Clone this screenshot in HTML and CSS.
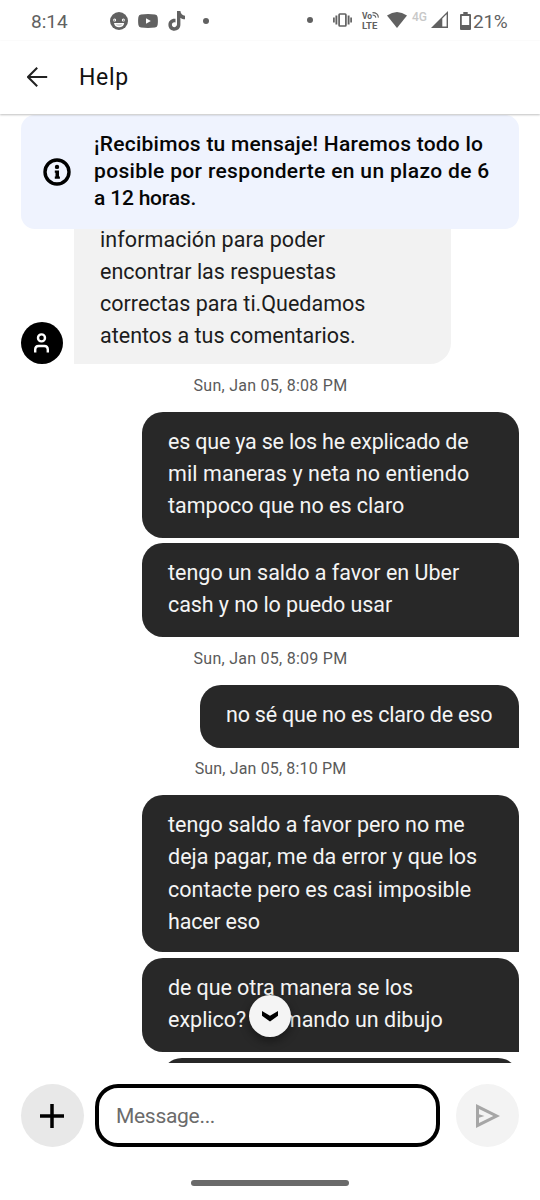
FILE: index.html
```html
<!DOCTYPE html>
<html lang="es">
<head>
<meta charset="utf-8">
<title>Help</title>
<link rel="stylesheet" href="styles.css">
</head>
<body>
<div class="screen">
  <div class="status">
    <div class="status-left">
      <span class="clock">8:14</span>
      <svg class="i-face" width="18" height="18" viewBox="0 0 18 18"><circle cx="9" cy="9" r="9" fill="#616161"/><circle cx="4.600" cy="8" r="1.500" fill="#fff"/><circle cx="13.400" cy="8" r="1.500" fill="#fff"/><circle cx="4.300" cy="8.200" r=".6" fill="#616161"/><circle cx="13.700" cy="8.200" r=".6" fill="#616161"/><path d="M4 11h10.200q-.8 4.300-5.100 4.300T4 11z" fill="#fff"/><path d="M5.500 12.300h7.200q-1 1.700-3.600 1.700t-3.600-1.700z" fill="#616161" opacity=".35"/></svg>
      <svg class="i-tube" width="20" height="14" viewBox="0 0 20 14"><path d="M3 .4Q10-.3 17 .4 19.300.6 19.600 3q.6 4 0 8-.3 2.400-2.600 2.600-7 .7-14 0Q.7 13.400.4 11q-.6-4 0-8Q.7.6 3 .4z" fill="#616161"/><path d="M8 4.200v5.600L12.800 7z" fill="#fff"/></svg>
      <svg class="i-tok" width="18" height="20" viewBox="0 0 18 20"><path d="M9 0h3.400c.2 2.700 2 4.500 4.600 4.700v3.500c-1.700 0-3.300-.5-4.600-1.500v6.900c0 8.200-12 8.200-12 .2 0-4 3.300-6.600 7.100-6v3.600c-2.100-.6-3.600.5-3.600 2.300 0 3.400 5.100 3.200 5.100-.4z" fill="#616161"/></svg>
      <span class="dot"></span>
    </div>
    <div class="status-right">
      <span class="dot"></span>
      <svg class="i-vib" width="19" height="14" viewBox="0 0 19 14" fill="none" stroke="#616161"><rect x="6.100" y="1" width="6.800" height="12" rx=".8" stroke-width="1.700"/><path d="M3.400 2.500v9M15.600 2.500v9" stroke-width="1.900"/><path d="M.9 4.500v5M18.100 4.500v5" stroke-width="1.700"/></svg>
      <span class="volte"><span class="vo">Vo<svg width="7" height="6" viewBox="0 0 7 6" fill="none" stroke="#616161" stroke-width="1.100"><path d="M.5.6q5.600 0 5.900 5M.5 3q3 0 3.300 2.600"/></svg></span><span>LTE</span></span>
      <svg class="i-wifi" width="20" height="16" viewBox="0 0 20 16"><path d="M0 3.600Q10-3.600 20 3.600L10 16z" fill="#616161"/></svg>
      <span class="net">4G</span>
      <svg class="i-sig" width="17" height="17" viewBox="0 0 17 17"><path d="M0 17L17 0v17z" fill="#616161"/><path d="M11.300 7.500l4.300-4.300v12.300h-4.300z" fill="#fff"/></svg>
      <svg class="i-bat" width="11" height="18" viewBox="0 0 11 18"><path d="M3.300 0h4.400v2H10q1 0 1 1v14q0 1-1 1H1q-1 0-1-1V3q0-1 1-1h2.300z" fill="#616161"/><path d="M1.800 4h7.400v9H1.800z" fill="#fff"/></svg>
      <span class="pct">21%</span>
    </div>
  </div>
  <header class="appbar">
    <svg width="21" height="20" viewBox="0 0 21 20" fill="none" stroke="#222" stroke-width="2"><path d="M20.200 10H1.200M10.200.8L1 10l9.200 9.200"/></svg>
    <h1>Help</h1>
  </header>
  <main class="chat">
    <div class="banner">
      <svg width="28" height="28" viewBox="0 0 28 28"><circle cx="14" cy="14" r="12" fill="none" stroke="#000" stroke-width="3.400"/><circle cx="14" cy="8.900" r="2.200"/><path d="M11.800 12.500h4.200v6h.9v2.300h-5.100v-2.300h.7v-3.700h-.7z"/></svg>
      <p><span class="b1">¡Recibimos tu mensaje! Haremos todo lo</span><span class="b2">posible por responderte en un plazo de 6</span><span class="b3">a 12 horas.</span></p>
    </div>
    <div class="row agent">
      <div class="avatar"><svg width="17" height="20" viewBox="0 0 17 20" fill="none" stroke="#fff" stroke-width="2.400"><circle cx="8.500" cy="4.900" r="3.500"/><path d="M2.200 19.500v-3q0-3.500 3.500-3.500h5.600q3.500 0 3.500 3.500v3"/></svg></div>
      <p class="bubble in"><span class="p1">información para poder</span><span>encontrar las respuestas</span><span>correctas para ti.Quedamos</span><span>atentos a tus comentarios.</span></p>
    </div>
    <time>Sun, Jan 05, 8:08 PM</time>
    <p class="bubble out three"><span class="m2">es que ya se los he explicado de</span><span class="p1">mil maneras y neta no entiendo</span><span>tampoco que no es claro</span></p>
    <p class="bubble out two"><span>tengo un saldo a favor en Uber</span><span class="m1">cash y no lo puedo usar</span></p>
    <time>Sun, Jan 05, 8:09 PM</time>
    <p class="bubble out one"><span class="m2">no sé que no es claro de eso</span></p>
    <time class="narrow">Sun, Jan 05, 8:10 PM</time>
    <p class="bubble out four"><span>tengo saldo a favor pero no me</span><span>deja pagar, me da error y que los</span><span>contacte pero es casi imposible</span><span class="m2">hacer eso</span></p>
    <p class="bubble out two"><span class="m1">de que otra manera se los</span><span>explico? Formando un dibujo</span></p>
    <p class="bubble out next"></p>
    <button class="jump" aria-label="Bajar"><svg width="16" height="11" viewBox="0 0 16 11"><path d="M0 0l8 4.800L16 0v4.800L8 10.500 0 4.800z"/></svg></button>
  </main>
  <footer class="composer">
    <button class="add" aria-label="Adjuntar"><svg width="24" height="24" viewBox="0 0 24 24" stroke="#000" stroke-width="3.500"><path d="M12 0v24M0 12h24"/></svg></button>
    <div class="field">Message...</div>
    <button class="send" aria-label="Enviar"><svg width="24" height="24" viewBox="0 0 24 24"><path fill="#a6a6a6" fill-rule="evenodd" d="M0 0l24 12L0 24zM3 4.900v5.300L8.500 12 3 13.800v5.300L17.300 12z"/></svg></button>
  </footer>
  <div class="homebar"></div>
</div>
</body>
</html>
```

FILE: styles.css
```css
* { box-sizing: border-box; }
body { margin: 0; background: #fff; font-family: Roboto, "Noto Sans", sans-serif; }
p, h1 { margin: 0; font-weight: 400; }
button { border: 0; padding: 0; border-radius: 50%; display: flex; align-items: center; justify-content: center; }
svg { display: block; flex: none; }

.screen { width: 540px; height: 1200px; display: flex; flex-direction: column; overflow: hidden; }

.status { height: 41px; display: flex; justify-content: space-between; padding: 0 32px 0 31px; color: #616161; flex: none; }
.status-left, .status-right { display: flex; align-items: center; }
.clock { width: 79px; font-size: 19px; line-height: 22px; padding-top: 2px; }
.i-tube { margin-left: 10px; }
.i-tok { margin-left: 10px; }
.dot { width: 6px; height: 6px; border-radius: 50%; background: #616161; }
.status-left .dot { margin-left: 17px; }
.status-right { padding-bottom: 2px; }
.i-vib { margin-left: 20px; }
.volte { margin: 2px 0 0 10px; width: 19px; display: flex; flex-direction: column; font-size: 9.500px; line-height: 9px; font-weight: 700; }
.vo { display: flex; font-size: 8.5px; }
.i-wifi { margin-left: 6px; }
.net { margin: 0 0 6px 5px; width: 16px; font-size: 12px; line-height: 12px; font-weight: 500; color: #c8c8c8; }
.i-sig { margin-left: 3px; }
.i-bat { margin: 2px 0 0 12px; }
.pct { margin-left: 2px; padding-top: 4px; width: 35px; font-size: 19px; line-height: 22px; letter-spacing: -.3px; }

.appbar { height: 73px; flex: none; display: flex; align-items: center; padding: 0 0 1px 27px; gap: 31px; position: relative; z-index: 3; background: #fff; box-shadow: 0 1px 2px rgba(0,0,0,.25); }
.appbar h1 { padding-top: 2px; font-size: 23px; line-height: 28px; letter-spacing: .7px; color: #111; }

.chat { height: 949px; flex: none; overflow: hidden; position: relative; display: flex; flex-direction: column; padding: 71px 21px 0; }
.banner { position: absolute; z-index: 2; top: 1px; left: 21px; right: 21px; height: 114px; border-radius: 14px; background: #eff3fe; display: flex; align-items: center; padding-left: 22px; gap: 23px; color: #060606; }
.banner p { font-size: 21px; line-height: 27px; font-weight: 500; padding-bottom: 2px; }
.banner span { display: block; white-space: nowrap; }
.b1 { letter-spacing: .24px; }
.b2 { letter-spacing: .34px; }
.b3 { letter-spacing: -.2px; }

.row { display: flex; align-items: flex-end; }
.avatar { width: 42px; height: 42px; border-radius: 50%; background: #000; display: flex; align-items: center; justify-content: center; margin-right: 10.500px; padding-right: 1px; }
.bubble { font-size: 21.5px; line-height: 32.2px; border-radius: 21px; padding: 14px 26px 0 26.500px; flex: none; }
.bubble span { display: block; white-space: nowrap; }
.bubble .p1 { letter-spacing: .08px; }
.bubble .m1 { letter-spacing: -.08px; }
.bubble .m2 { letter-spacing: -.2px; }
.in { width: 377.5px; height: 179px; padding-top: 38.5px; background: #f2f2f2; color: #1c1c1c; border-bottom-left-radius: 0; }
.out { width: 377.5px; align-self: flex-end; background: #282828; color: #f4f4f4; border-bottom-right-radius: 0; }
.one { width: 319.5px; height: 63px; }
.two { height: 94px; margin-bottom: 6px; }
.three { height: 126px; margin-bottom: 5.500px; }
.four { height: 157px; margin-bottom: 6px; }
.next { width: 358px; height: 63px; }
time { height: 47.600px; flex: none; padding: 11.500px 0 0 1px; text-align: center; font-size: 16px; line-height: 20px; letter-spacing: .26px; color: #5a5a5a; }
.two + time { margin-top: -6px; }
.narrow { letter-spacing: .15px; }
.jump { position: absolute; z-index: 2; left: 249px; bottom: 26px; width: 42px; height: 42px; background: #f4f4f4; box-shadow: 0 4px 10px rgba(0,0,0,.4); }

.composer { flex: none; display: flex; align-items: center; padding: 21px 21px 0; height: 84px; }
.add, .send { width: 63px; height: 63px; flex: none; background: #e8e8e8; }
.add { padding-right: 1px; }
.send { background: #f3f3f3; }
.field { width: 345.5px; height: 63px; margin: 0 16px 0 10.500px; border: 4px solid #000; border-radius: 23px; padding-left: 17.500px; font-size: 21px; line-height: 57px; letter-spacing: -.3px; color: #6b6b6b; }
.homebar { width: 158px; height: 6px; border-radius: 3px; background: #6a6a6a; margin: 33px 0 0 191px; flex: none; }
```
